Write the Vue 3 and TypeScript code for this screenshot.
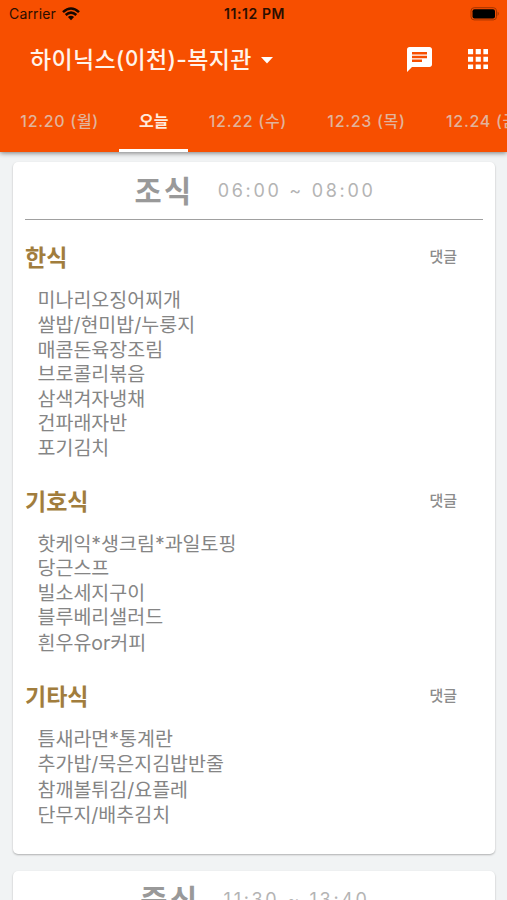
<script setup lang="ts">
interface Course {
  name: string
  items: string[]
}
interface Meal {
  name: string
  hours: string
  courses: Course[]
}

const tabs: string[] = ['12.20 (월)', '오늘', '12.22 (수)', '12.23 (목)', '12.24 (금)']
const activeTab = 1

const meals: Meal[] = [
  {
    name: '조식',
    hours: '06:00 ~ 08:00',
    courses: [
      {
        name: '한식',
        items: ['미나리오징어찌개', '쌀밥/현미밥/누룽지', '매콤돈육장조림', '브로콜리볶음', '삼색겨자냉채', '건파래자반', '포기김치'],
      },
      {
        name: '기호식',
        items: ['핫케익*생크림*과일토핑', '당근스프', '빌소세지구이', '블루베리샐러드', '흰우유or커피'],
      },
      {
        name: '기타식',
        items: ['틈새라면*통계란', '추가밥/묵은지김밥반줄', '참깨볼튀김/요플레', '단무지/배추김치'],
      },
    ],
  },
  { name: '중식', hours: '11:30 ~ 13:40', courses: [] },
]

// Lines that mix in Latin glyphs sit slightly taller than pure Hangul ones.
const isMixed = (text: string): boolean => /[/a-z]/.test(text)
</script>

<template>
  <div class="screen">
    <header class="header">
      <div class="status">
        <div class="carrier">
          <span>Carrier</span>
          <svg class="wifi" viewBox="0 0 18 14">
            <path d="M1 5.1Q9-2.1 17 5.1" />
            <path d="M3.7 8Q9 3.2 14.3 8" />
            <path class="dot" d="M9 13.2 5.9 10.1Q9 7.5 12.1 10.1Z" />
          </svg>
        </div>
        <span class="clock">11:12 PM</span>
        <div class="power">
          <svg class="battery" viewBox="0 0 30 14">
            <rect class="shell" x="1" y="0.7" width="25.5" height="12.2" rx="3.2" />
            <rect x="2.5" y="2.2" width="22.5" height="9.2" rx="2" />
            <path class="tip" d="M27.6 4.6Q30 6.8 27.6 9Z" />
          </svg>
        </div>
      </div>

      <div class="toolbar">
        <h1 class="place">하이닉스(이천)-복지관</h1>
        <svg class="caret" viewBox="0 0 12 7"><path d="M0 0H12L6 6.5Z" /></svg>
        <svg class="chat" viewBox="2 2 20 20">
          <path d="M20 2H4c-1.1 0-1.99.9-1.99 2L2 22l4-4h14c1.1 0 2-.9 2-2V4c0-1.1-.9-2-2-2zM6 9h12v2H6V9zm8 5H6v-2h8v2zm4-6H6V6h12v2z" />
        </svg>
        <svg class="apps" viewBox="4 4 16 16">
          <path d="M4 8h4V4H4v4zm6 12h4v-4h-4v4zm-6 0h4v-4H4v4zm0-6h4v-4H4v4zm6 0h4v-4h-4v4zm6-10v4h4V4h-4zm-6 4h4V4h-4v4zm6 6h4v-4h-4v4zm0 6h4v-4h-4v4z" />
        </svg>
      </div>

      <nav class="tabs">
        <div v-for="(tab, i) in tabs" :key="tab" class="tab" :class="{ active: i === activeTab }">{{ tab }}</div>
      </nav>
    </header>

    <main class="meals">
      <section v-for="meal in meals" :key="meal.name" class="card">
        <div class="meal-head">
          <h2 class="meal-name">{{ meal.name }}</h2>
          <span class="hours">{{ meal.hours }}</span>
        </div>
        <article v-for="course in meal.courses" :key="course.name" class="course">
          <div class="course-head">
            <h3 class="course-name">{{ course.name }}</h3>
            <span class="comment">댓글</span>
          </div>
          <ul class="items">
            <li v-for="item in course.items" :key="item" :class="{ mixed: isMixed(item) }">{{ item }}</li>
          </ul>
        </article>
      </section>
    </main>
  </div>
</template>

<style>
body {
  background: #f1f3f4;
}
</style>

<style scoped>
.screen {
  height: 900px;
  overflow: hidden;
  display: flex;
  flex-direction: column;
  background: #f1f3f4;
  font-family: Inter, "Noto Sans CJK KR", sans-serif;
}
h1, h2, h3, ul {
  margin: 0;
  padding: 0;
}
.header {
  flex: none;
  height: 152px;
  background: #f74f00;
  box-shadow: 0 1px 5px rgba(0, 0, 0, 0.5);
  z-index: 1;
}
.status {
  display: grid;
  grid-template-columns: 1fr auto 1fr;
  align-items: center;
  height: 27px;
  padding: 0 7px 0 9px;
  font-size: 14px;
  color: #2b0e00;
}
.carrier {
  display: flex;
  align-items: center;
  gap: 6px;
  letter-spacing: 0.15px;
}
.wifi {
  width: 18px;
  height: 14px;
  fill: none;
  stroke: #160700;
  stroke-width: 2.6;
}
.wifi .dot {
  fill: #160700;
  stroke: none;
}
.clock {
  font-weight: 600;
  font-size: 14px;
  letter-spacing: 0.6px;
}
.power {
  display: flex;
  justify-content: flex-end;
}
.battery {
  width: 30px;
  height: 14px;
}
.battery .shell {
  fill: none;
  stroke: #a33400;
}
.battery .tip {
  fill: #a33400;
}
.toolbar {
  display: flex;
  align-items: center;
  height: 64px;
  padding: 0 19px 0 30px;
  color: #fff3ea;
}
.toolbar svg {
  fill: #fff;
}
.place {
  padding-top: 2px;
  font-size: 23px;
  font-weight: 500;
  line-height: 30px;
  letter-spacing: 0.3px;
  white-space: nowrap;
}
.caret {
  width: 12px;
  height: 7px;
  margin: 2px 0 0 9px;
}
.chat {
  width: 25px;
  height: 25px;
  margin-left: auto;
}
.apps {
  width: 20.5px;
  height: 20.5px;
  margin-left: 36px;
}
.tabs {
  display: flex;
  height: 61px;
}
.tab {
  flex: none;
  box-sizing: border-box;
  height: 61px;
  padding: 0 20.1px 0 20.3px;
  line-height: 61px;
  font-size: 16px;
  font-weight: 500;
  letter-spacing: 0.7px;
  color: #e2b39c;
  white-space: nowrap;
}
.tab.active {
  padding: 0 20px;
  border-bottom: 3px solid #fff;
  font-weight: 700;
  letter-spacing: 0;
  color: #ffeadb;
}
.meals {
  display: flex;
  flex-direction: column;
  gap: 17px;
  padding: 10px 12px 0 13px;
}
.card {
  flex: none;
  box-sizing: border-box;
  padding: 0 12px 26px;
  border-radius: 5px;
  background: #fff;
  box-shadow: 0 1px 2px rgba(0, 0, 0, 0.28);
}
.meal-head {
  display: flex;
  justify-content: center;
  align-items: center;
  gap: 24px;
  height: 57px;
  padding-left: 2px;
  border-bottom: 1px solid #a0a0a0;
}
.meal-name {
  font: 700 29.5px/55px "Noto Sans CJK KR", sans-serif;
  height: 57px;
  letter-spacing: 2.5px;
  color: #999;
}
.hours {
  font-size: 18px;
  font-weight: 400;
  letter-spacing: 2.7px;
  color: #b4b4b4;
}
.course-head {
  display: flex;
  justify-content: space-between;
  align-items: center;
  height: 67.5px;
  padding: 4px 26px 0 0;
  box-sizing: border-box;
}
.course-name {
  font: 700 23px "Noto Sans CJK KR", sans-serif;
  color: #a17d3d;
}
.comment {
  font: 500 15px "Noto Sans CJK KR", sans-serif;
  color: #8c8c8c;
}
.items {
  list-style: none;
  padding-left: 12.5px;
  font-size: 19.5px;
  font-weight: 400;
  color: #858585;
}
.items li {
  height: 24.5px;
  line-height: 24.5px;
}
.items li.mixed {
  padding-top: 1px;
}
.course + .course {
  margin-top: 4px;
}
</style>
